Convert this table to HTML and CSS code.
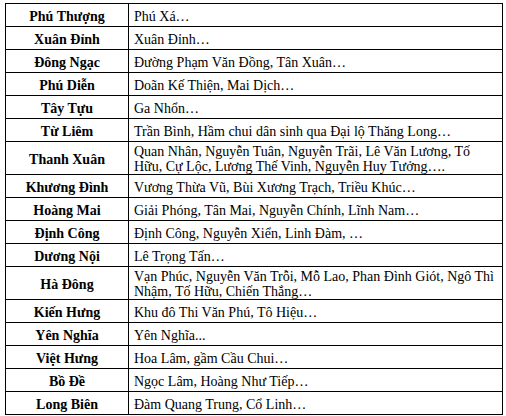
FILE: index.html
```html
<!DOCTYPE html>
<html lang="vi">
<head>
<meta charset="utf-8">
<link rel="stylesheet" href="styles.css">
</head>
<body>
<table class="tbl">
<colgroup><col class="c1"><col class="c2"></colgroup>
<tr><th>Phú Thượng</th><td>Phú Xá…</td></tr>
<tr><th>Xuân Đỉnh</th><td>Xuân Đỉnh…</td></tr>
<tr><th>Đông Ngạc</th><td>Đường Phạm Văn Đồng, Tân Xuân…</td></tr>
<tr><th>Phú Diễn</th><td>Doãn Kế Thiện, Mai Dịch…</td></tr>
<tr><th>Tây Tựu</th><td>Ga Nhổn…</td></tr>
<tr><th>Từ Liêm</th><td>Trần Bình, Hầm chui dân sinh qua Đại lộ Thăng Long…</td></tr>
<tr><th>Thanh Xuân</th><td>Quan Nhân, Nguyễn Tuân, Nguyễn Trãi, Lê Văn Lương, Tố Hữu, Cự Lộc, Lương Thế Vinh, Nguyễn Huy Tưởng….</td></tr>
<tr><th>Khương Đình</th><td>Vương Thừa Vũ, Bùi Xương Trạch, Triều Khúc…</td></tr>
<tr><th>Hoàng Mai</th><td>Giải Phóng, Tân Mai, Nguyễn Chính, Lĩnh Nam…</td></tr>
<tr><th>Định Công</th><td>Định Công, Nguyễn Xiển, Linh Đàm, …</td></tr>
<tr><th>Dương Nội</th><td>Lê Trọng Tấn…</td></tr>
<tr><th>Hà Đông</th><td>Vạn Phúc, Nguyễn Văn Trỗi, Mỗ Lao, Phan Đình Giót, Ngô Thì Nhậm, Tố Hữu, Chiến Thắng…</td></tr>
<tr><th>Kiến Hưng</th><td>Khu đô Thi Văn Phú, Tô Hiệu…</td></tr>
<tr><th>Yên Nghĩa</th><td>Yên Nghĩa...</td></tr>
<tr><th>Việt Hưng</th><td>Hoa Lâm, gầm Cầu Chui…</td></tr>
<tr><th>Bồ Đề</th><td>Ngọc Lâm, Hoàng Như Tiếp…</td></tr>
<tr><th>Long Biên</th><td>Đàm Quang Trung, Cổ Linh…</td></tr>
</table>
</body>
</html>
```
FILE: styles.css
```css
html, body {
  margin: 0;
  background: #fff;
}
body {
  padding: 3px 0 0 5px;
  font-family: "Liberation Serif", "Times New Roman", "DejaVu Serif", serif;
  font-size: 14px;
  color: #000;
}
.tbl {
  border-collapse: collapse;
  width: 497px;
  table-layout: fixed;
}
.c1 { width: 123px; }
.c2 { width: 374px; }
.tbl th, .tbl td {
  border: 1px solid #000;
  height: 20px;
  padding: 2px 5px 0 5px;
  line-height: 15px;
  vertical-align: middle;
}
.tbl th {
  font-weight: bold;
  text-align: center;
}
.tbl td {
  text-align: left;
}
```
